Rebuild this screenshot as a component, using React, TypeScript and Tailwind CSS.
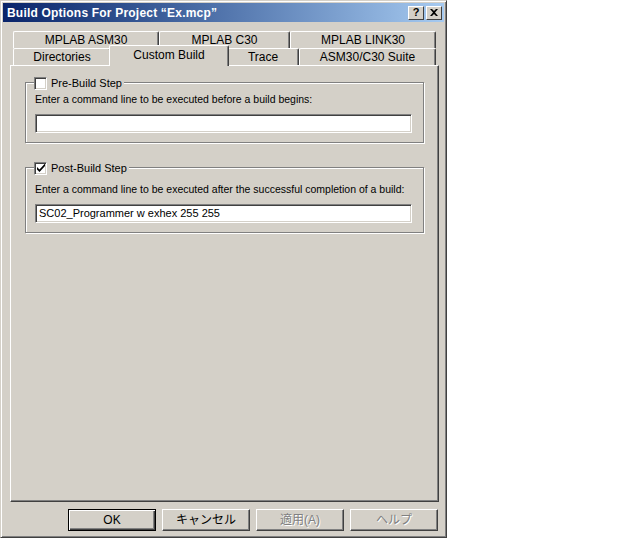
import React from 'react';

const font = { fontFamily: '"Liberation Sans", "Noto Sans CJK JP", sans-serif' };

const Tab: React.FC<{ label: string; w: string; active?: boolean }> = ({ label, w, active }) => (
  <div
    className={`${w} flex items-center justify-center bg-[#d4d0c8] border-t border-l border-white border-r border-r-[#404040] rounded-t-[2px] shadow-[inset_-1px_0_0_#808080] text-[12px] text-black ${
      active ? 'h-[21px] -mt-[3px] -mx-[2px] relative z-10 pb-[3px]' : 'h-[17px]'
    }`}
  >
    {label}
  </div>
);

const Checkbox: React.FC<{ checked?: boolean }> = ({ checked }) => (
  <div className="w-[13px] h-[13px] bg-white border border-t-[#808080] border-l-[#808080] border-r-white border-b-white shadow-[inset_1px_1px_0_#404040,inset_-1px_-1px_0_#d4d0c8] flex items-center justify-center">
    {checked && (
      <svg width="8" height="8" viewBox="0 0 8 8">
        <path d="M0 3 L0 5.5 L2.5 8 L8 2 L8 -0.5 L2.5 5.5 Z" fill="#000" />
      </svg>
    )}
  </div>
);

const TextBox: React.FC<{ value?: string }> = ({ value }) => (
  <div className="ml-[9px] mr-[11px] h-[19px] bg-white border border-t-[#808080] border-l-[#808080] border-r-white border-b-white shadow-[inset_1px_1px_0_#404040,inset_-1px_-1px_0_#d4d0c8] pl-[3px] flex items-center text-[11px] text-black">
    {value}
  </div>
);

const Group: React.FC<{ label: string; text: string; checked?: boolean; value?: string; mt: string; tall?: boolean }> = ({
  label,
  text,
  checked,
  value,
  mt,
  tall,
}) => (
  <div
    className={`relative ${mt} mx-[14px] ${tall ? 'h-[66px]' : 'h-[61px]'} border border-[#808080] shadow-[1px_1px_0_#fff,inset_1px_1px_0_#fff]`}
  >
    <div className="absolute -top-[8px] left-[8px] flex items-center gap-[4px] bg-[#d4d0c8] pr-[2px] text-[11px] text-black">
      <Checkbox checked={checked} />
      <span>{label}</span>
    </div>
    <div className={`${tall ? 'pt-[14px]' : 'pt-[9px]'} pl-[9px] text-[10.5px] text-black leading-[14px]`}>{text}</div>
    <div className="mt-[8px]">
      <TextBox value={value} />
    </div>
  </div>
);

const Btn: React.FC<{ label: string; isDefault?: boolean; disabled?: boolean }> = ({ label, isDefault, disabled }) => (
  <div
    className={`w-[88px] h-[22px] flex items-center justify-center bg-[#d4d0c8] text-[12px] ${
      isDefault
        ? 'border border-black shadow-[inset_1px_1px_0_#fff,inset_-1px_-1px_0_#404040,inset_-2px_-2px_0_#808080]'
        : 'border border-t-white border-l-white border-r-[#404040] border-b-[#404040] shadow-[inset_-1px_-1px_0_#808080]'
    } ${disabled ? 'text-[#808080] [text-shadow:1px_1px_0_#fff]' : 'text-black'}`}
  >
    {label}
  </div>
);

export default function App() {
  return (
    <div className="w-[640px] h-[538px] bg-white flex" style={font}>
      <div className="w-[447px] h-[538px] bg-[#d4d0c8] border border-t-[#d4d0c8] border-l-[#d4d0c8] border-r-[#404040] border-b-[#404040] shadow-[inset_1px_1px_0_#fff,inset_-1px_-1px_0_#808080] p-[2px] flex flex-col">
        <div className="h-[19px] bg-gradient-to-r from-[#0a246a] to-[#a6caf0] flex items-center justify-between pl-[4px] pr-[2px]">
          <span className="text-white font-bold text-[12px] tracking-[0.2px]">Build Options For Project “Ex.mcp”</span>
          <div className="flex gap-[2px]">
            <div className="w-[16px] h-[14px] bg-[#d4d0c8] border border-t-white border-l-white border-r-[#404040] border-b-[#404040] flex items-center justify-center text-[11px] font-bold leading-none">
              ?
            </div>
            <div className="w-[16px] h-[14px] bg-[#d4d0c8] border border-t-white border-l-white border-r-[#404040] border-b-[#404040] flex items-center justify-center">
              <svg width="8" height="7" viewBox="0 0 8 7">
                <path d="M0 0 L2 0 L4 2 L6 0 L8 0 L5 3.5 L8 7 L6 7 L4 5 L2 7 L0 7 L3 3.5 Z" fill="#000" />
              </svg>
            </div>
          </div>
        </div>

        <div className="mt-[9px] pl-[10px] flex">
          <Tab label="MPLAB ASM30" w="w-[146px]" />
          <Tab label="MPLAB C30" w="w-[131px]" />
          <Tab label="MPLAB LINK30" w="w-[146px]" />
        </div>
        <div className="pl-[10px] flex">
          <Tab label="Directories" w="w-[98px]" />
          <Tab label="Custom Build" w="w-[120px]" active />
          <Tab label="Trace" w="w-[72px]" />
          <Tab label="ASM30/C30 Suite" w="w-[137px]" />
        </div>

        <div className="ml-[7px] w-[429px] h-[437px] -mt-[1px] border border-t-white border-l-white border-r-[#404040] border-b-[#404040] shadow-[inset_-1px_-1px_0_#808080] flex flex-col">
          <Group
            mt="mt-[16px]"
            label="Pre-Build Step"
            text="Enter a command line to be executed before a build begins:"
          />
          <Group
            mt="mt-[24px]"
            label="Post-Build Step"
            checked
            tall
            text="Enter a command line to be executed after the successful completion of a build:"
            value="SC02_Programmer w  exhex 255 255"
          />
        </div>

        <div className="mt-[7px] flex justify-end gap-[6px] pr-[6px]">
          <Btn label="OK" isDefault />
          <Btn label="キャンセル" />
          <Btn label="適用(A)" disabled />
          <Btn label="ヘルプ" disabled />
        </div>
      </div>
    </div>
  );
}
